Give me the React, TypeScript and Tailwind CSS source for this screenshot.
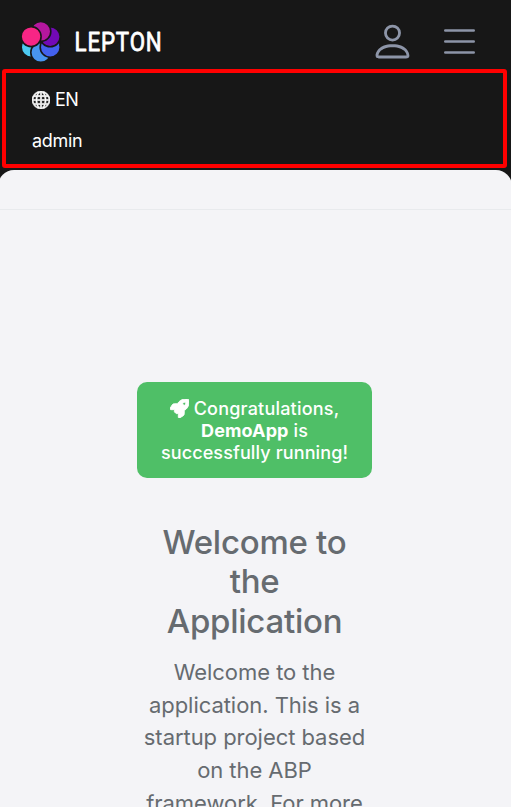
import { BsGlobe, BsPerson } from "react-icons/bs";
import { FaRocket } from "react-icons/fa6";

function Logo() {
  return (
    <svg width="160" height="44" viewBox="0 0 160 44" role="img" aria-label="Lepton">
      <g stroke="#171717" strokeWidth="1.6">
        <circle cx="11.2" cy="27.2" r="10" fill="#4cc9f0" />
        <circle cx="20.8" cy="32.4" r="10" fill="#4895ef" />
        <circle cx="30.2" cy="27.2" r="10" fill="#4361ee" />
        <circle cx="30.2" cy="16.8" r="10" fill="#7209b7" />
        <circle cx="20.8" cy="11.4" r="10" fill="#b5179e" />
        <circle cx="11.1" cy="16.6" r="10" fill="#f72585" />
      </g>
      <text x="54.6" y="31.4" textLength="88" lengthAdjust="spacingAndGlyphs" fill="#fff" stroke="#fff" strokeWidth="0.8" strokeLinejoin="round" className="font-['Roboto',sans-serif] text-[26px] font-normal tracking-[1px]">LEPTON</text>
    </svg>
  );
}

function Header() {
  return (
    <header className="flex h-[69px] items-start justify-between pl-5 pr-[35px] pt-5">
      <Logo />
      <div className="flex items-start gap-[29.5px] text-[#8d95a8]">
        <BsPerson size={45} className="-mt-[1px]" />
        <svg width="32" height="40" viewBox="0 0 32 40" stroke="currentColor" strokeWidth="2.6" strokeLinecap="round" className="mt-0.5">
          <path d="M1.3 8.5H29.7M1.3 19.5H29.7M1.3 30.5H29.7" />
        </svg>
      </div>
    </header>
  );
}

export default function App() {
  return (
    <div className="h-[807px] overflow-hidden bg-[#171717] font-['Inter',sans-serif]">
      <Header />
      <nav className="ml-[2px] mr-1 h-[99px] rounded-[3px] border-4 border-[#ff0000] pl-[26px] pt-[13px] text-[18px] leading-[27px] text-white">
        <div className="flex items-center gap-[5px]"><BsGlobe size={18} stroke="currentColor" strokeWidth={0.6} /><span className="tracking-[-0.5px]">EN</span></div>
        <div className="mt-3.5 tracking-[-0.3px]">admin</div>
      </nav>
      <main className="-ml-0.5 -mr-px mt-[2px] h-[637px] overflow-hidden rounded-t-[16px] bg-[#f4f4f7]">
        <div className="h-10 border-b border-[#e8eaed]" />
        <section className="ml-[139px] mt-[172px] w-[235px] text-center text-[#666b70]">
          <div className="rounded-[10px] bg-[#4fbf67] px-4 pb-3.5 pt-4 text-[18px] font-medium leading-[22px] tracking-[0.12px] text-white">
            <FaRocket className="mr-[5px] inline -translate-y-0.5" size={19} stroke="currentColor" strokeWidth={24} /><span className="tracking-[0.2px]">Congratulations,</span><br />
            <strong className="font-bold">DemoApp</strong> is<br />successfully running!
          </div>
          <h1 className="mt-[44.5px] text-[33px] font-medium leading-[39.6px] tracking-[-0.25px]">Welcome to<br />the<br />Application</h1>
          <p className="mt-[14.9px] whitespace-nowrap text-[22px] leading-[32.6px] tracking-[-0.05px]">Welcome to the<br />application. This is a<br />startup project based<br />on the ABP<br />framework. For more</p>
        </section>
      </main>
    </div>
  );
}
